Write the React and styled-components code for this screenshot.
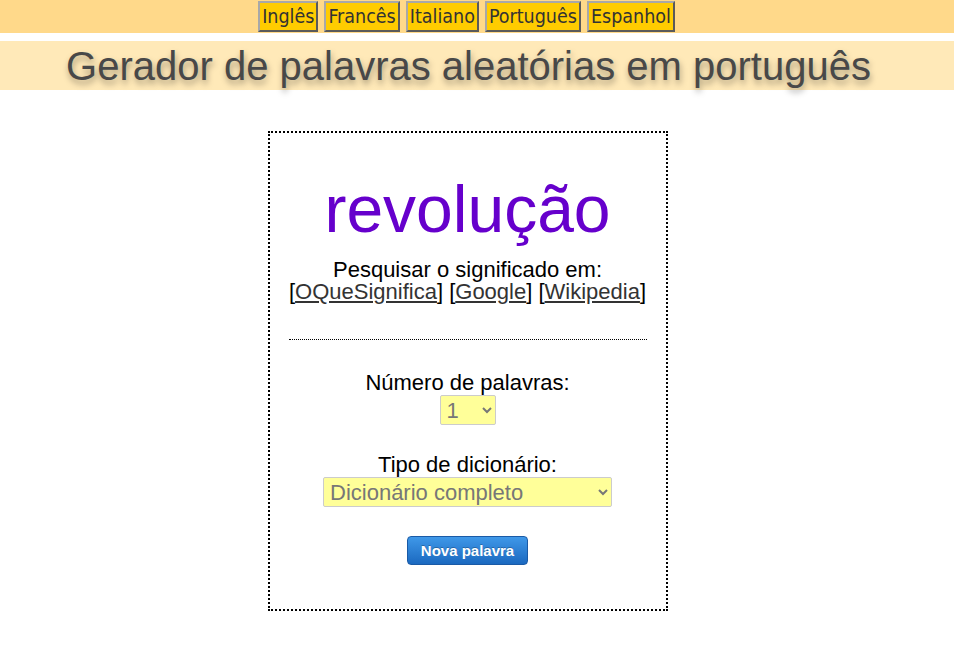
import React from "react";
import styled, { createGlobalStyle } from "styled-components";

const Global = createGlobalStyle`
  html, body { margin: 0; padding: 0; background: #fff; }
  body { font-family: "Liberation Sans", Arial, sans-serif; }
`;

const NavBar = styled.nav`
  background: #ffd98a;
  height: 33px;
  box-sizing: border-box;
  padding: 1px 21px 0 0;
  display: flex;
  justify-content: center;
  gap: 6px;
`;

const LangButton = styled.a`
  display: block;
  box-sizing: border-box;
  height: 31px;
  padding: 0 2px;
  background: #ffcc00;
  border: 2px solid;
  border-color: #a8a8a8 #5a5a5a #5a5a5a #a8a8a8;
  color: #333;
  font-family: "DejaVu Sans Condensed", "DejaVu Sans", sans-serif;
  font-stretch: condensed;
  font-size: 19.5px;
  line-height: 27px;
  text-decoration: none;
`;

const TitleBand = styled.header`
  margin-top: 8px;
  background: #ffe9b8;
  height: 49px;
  padding-right: 17px;
  display: flex;
  align-items: center;
  justify-content: center;
`;

const Title = styled.h1`
  margin: 0;
  font-family: "Liberation Sans", Arial, sans-serif;
  font-weight: normal;
  font-size: 40px;
  line-height: 46px;
  color: #484848;
  text-shadow: 1px 4px 6px rgba(0, 0, 0, 0.35);
`;

const Main = styled.main`
  padding: 41px 19px 40px 0;
  display: flex;
  justify-content: center;
`;

const Card = styled.section`
  width: 400px;
  box-sizing: border-box;
  border: 2px dotted #000;
  padding: 32px 19px 44px;
  text-align: center;
  color: #000;
`;

const Word = styled.div`
  font-size: 66px;
  line-height: 88px;
  color: #6600cc;
`;

const Lookup = styled.p`
  margin: 6px 0 0;
  font-size: 22px;
  line-height: 22px;
`;

const Ref = styled.a`
  color: #333;
  text-decoration: underline;
`;

const Divider = styled.hr`
  border: none;
  border-top: 1px dotted #000;
  height: 0;
  margin: 36px 0 0;
`;

const Field = styled.div`
  margin-top: ${(p) => p.$top}px;
  display: flex;
  flex-direction: column;
  align-items: center;
`;

const Label = styled.label`
  font-size: 22px;
  line-height: 22px;
`;

const Select = styled.select`
  margin-top: 1px;
  width: ${(p) => p.$w}px;
  height: 30px;
  background-color: #ffff99;
  border: 1px solid #cccccc;
  border-radius: 2px;
  color: #777;
  font-family: "Liberation Sans", Arial, sans-serif;
  font-size: 22px;
  padding: 0 2px;
`;

const Action = styled.button`
  margin-top: 29px;
  height: 29px;
  padding: 0 13px;
  border: 1px solid #1a5aa6;
  border-radius: 4px;
  background: linear-gradient(#3f98e8, #1b69c0);
  color: #fff;
  font-family: "Liberation Sans", Arial, sans-serif;
  font-weight: bold;
  font-size: 15px;
  text-shadow: 0 -1px 0 rgba(0, 0, 0, 0.25);
  cursor: pointer;
`;

const langs = ["Inglês", "Francês", "Italiano", "Português", "Espanhol"];

export default function App() {
  return (
    <>
      <Global />
      <NavBar>
        {langs.map((l) => (
          <LangButton key={l} href="#">
            {l}
          </LangButton>
        ))}
      </NavBar>
      <TitleBand>
        <Title>Gerador de palavras aleatórias em português</Title>
      </TitleBand>
      <Main>
        <Card>
          <Word>revolução</Word>
          <Lookup>
            Pesquisar o significado em:
            <br />[<Ref href="#">OQueSignifica</Ref>] [<Ref href="#">Google</Ref>] [
            <Ref href="#">Wikipedia</Ref>]
          </Lookup>
          <Divider />
          <Field $top={32}>
            <Label htmlFor="n">Número de palavras:</Label>
            <Select id="n" $w={56} defaultValue="1">
              <option value="1">1</option>
              <option value="2">2</option>
              <option value="3">3</option>
            </Select>
          </Field>
          <Field $top={29}>
            <Label htmlFor="t">Tipo de dicionário:</Label>
            <Select id="t" $w={289} defaultValue="c">
              <option value="c">Dicionário completo</option>
              <option value="b">Dicionário básico</option>
            </Select>
          </Field>
          <Action type="button">Nova palavra</Action>
        </Card>
      </Main>
    </>
  );
}
